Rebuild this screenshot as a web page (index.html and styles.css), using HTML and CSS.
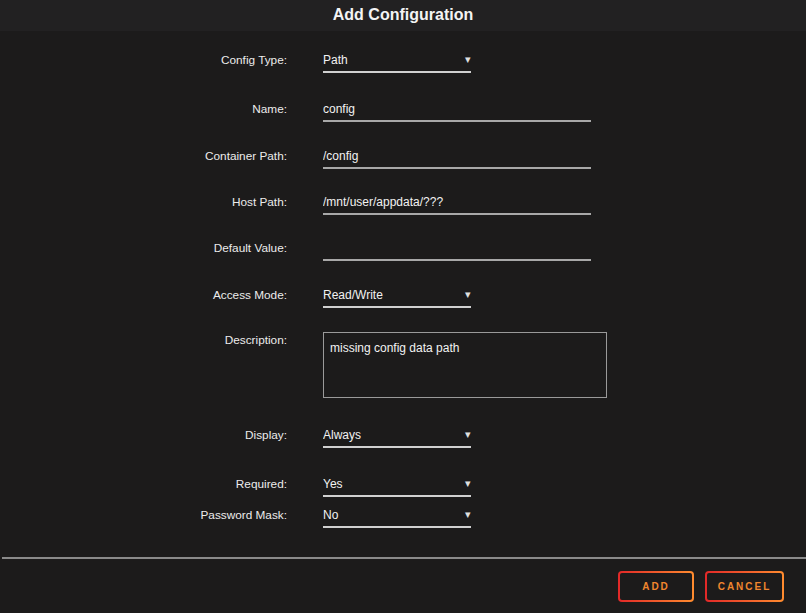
FILE: index.html
```html
<!DOCTYPE html>
<html lang="en">
<head>
    <meta charset="UTF-8">
    <title>Add Configuration</title>
    <link rel="stylesheet" href="styles.css">
</head>
<body>
    <div class="title-bar">Add Configuration</div>

    <form class="config-form">
        <div class="row">
            <label>Config Type:</label>
            <div class="select-wrap">
                <select><option>Path</option></select>
            </div>
        </div>
        <div class="row gap-49">
            <label>Name:</label>
            <input type="text" value="config">
        </div>
        <div class="row gap-47">
            <label>Container Path:</label>
            <input type="text" value="/config">
        </div>
        <div class="row">
            <label>Host Path:</label>
            <input type="text" value="/mnt/user/appdata/???">
        </div>
        <div class="row">
            <label>Default Value:</label>
            <input type="text" value="">
        </div>
        <div class="row gap-47">
            <label>Access Mode:</label>
            <div class="select-wrap">
                <select><option>Read/Write</option></select>
            </div>
        </div>
        <div class="row row-desc">
            <label>Description:</label>
            <textarea>missing config data path</textarea>
        </div>
        <div class="row after-desc">
            <label>Display:</label>
            <div class="select-wrap">
                <select><option>Always</option></select>
            </div>
        </div>
        <div class="row gap-49">
            <label>Required:</label>
            <div class="select-wrap">
                <select><option>Yes</option></select>
            </div>
        </div>
        <div class="row gap-31">
            <label>Password Mask:</label>
            <div class="select-wrap">
                <select><option>No</option></select>
            </div>
        </div>
    </form>

    <div class="footer">
        <button class="btn">ADD</button>
        <button class="btn btn-cancel">CANCEL</button>
    </div>
</body>
</html>
```

FILE: styles.css
```css
body {
    margin: 0;
    background-color: #1c1b1b;
    color: #f2f2f2;
    font-family: 'Liberation Sans', Arial, sans-serif;
    font-size: 12px;
    height: 613px;
    overflow: hidden;
}

.title-bar {
    height: 31px;
    line-height: 29px;
    background-color: #222122;
    text-align: center;
    font-size: 16px;
    font-weight: bold;
    color: #f4f4f4;
}

.config-form {
    padding-top: 18px;
    height: 508px;
}

.row {
    display: grid;
    grid-template-columns: 287px 1fr;
    column-gap: 36px;
    margin-top: 22px;
}

.row:first-child {
    margin-top: 0;
}

.gap-49 { margin-top: 25px; }
.gap-47 { margin-top: 23px; }
.gap-31 { margin-top: 7px; }
.row-desc { margin-top: 24px; }
.after-desc { margin-top: 26px; }

.row label {
    text-align: right;
    line-height: 22px;
    color: #ececec;
    font-size: 11.8px;
}

.row input,
.row select {
    box-sizing: border-box;
    height: 24px;
    padding: 0;
    margin: 0;
    border: none;
    border-bottom: 2px solid #a8a8a8;
    background: transparent;
    color: #f2f2f2;
    font-family: inherit;
    font-size: 12px;
    outline: none;
}

.row input {
    width: 268px;
}

.select-wrap {
    position: relative;
    width: 148px;
}

.row select {
    width: 148px;
    appearance: none;
    -webkit-appearance: none;
    border-bottom-color: #d0d0d0;
}

.select-wrap::after {
    content: "\25BE";
    position: absolute;
    right: 0;
    top: 4px;
    font-size: 11px;
    color: #e0e0e0;
}

.row-desc label {
    line-height: 16px;
}

.row textarea {
    box-sizing: border-box;
    width: 284px;
    height: 66px;
    margin: 0;
    padding: 8px 6px;
    border: 1px solid #9a9a9a;
    background: transparent;
    color: #f2f2f2;
    font-family: inherit;
    font-size: 12px;
    resize: none;
    outline: none;
}

.footer {
    margin-left: 2px;
    border-top: 2px solid #8a8a8a;
    display: flex;
    justify-content: flex-end;
    gap: 11px;
    padding: 12px 22px 0 0;
}

.btn {
    box-sizing: border-box;
    width: 76px;
    height: 31px;
    border: 2px solid transparent;
    border-radius: 4px;
    background: linear-gradient(#1c1b1b, #1c1b1b) padding-box,
                linear-gradient(90deg, #e22828, #ff8c2f) border-box;
    color: #f0862e;
    font-family: inherit;
    font-size: 10px;
    font-weight: bold;
    letter-spacing: 2px;
    padding: 0;
}

.btn-cancel {
    width: 79px;
}
```
